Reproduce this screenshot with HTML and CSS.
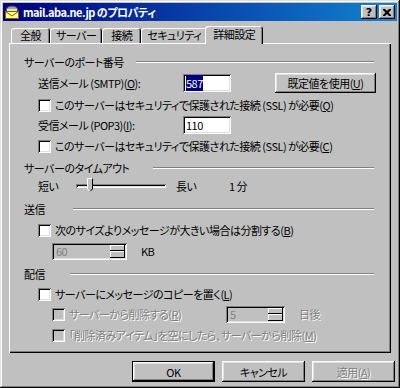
FILE: index.html
```html
<!DOCTYPE html>
<html lang="ja">
<head>
    <meta charset="UTF-8">
    <title>mail.aba.ne.jp のプロパティ</title>
    <link rel="stylesheet" href="styles.css">
</head>
<body>

<div class="window">
    <!-- Title Bar -->
    <div class="titlebar">
        <svg class="title-icon" width="16" height="16" viewBox="0 0 16 16">
            <path d="M2 7 Q2 2 8 2 Q14 2 14 7 Z" fill="#a0a0a0" stroke="#404040" stroke-width="1"/>
            <rect x="3" y="5" width="10" height="2" fill="#e0e0e0"/>
            <rect x="1.5" y="7.5" width="13" height="7" fill="#ffff80" stroke="#806000" stroke-width="1"/>
            <path d="M1.5 7.5 L8 12 L14.5 7.5" fill="none" stroke="#806000" stroke-width="1"/>
        </svg>
        <span class="title-text">mail.aba.ne.jp のプロパティ</span>
        <div class="caption-buttons">
            <button class="cap-btn">?</button>
            <button class="cap-btn cap-close">
                <svg width="8" height="7" viewBox="0 0 8 7"><path d="M0 0h2l2 2 2-2h2v1l-2.5 2.5L8 6v1H6L4 5 2 7H0V6l2.5-2.5L0 1z" fill="#000"/></svg>
            </button>
        </div>
    </div>

    <!-- Tabs -->
    <div class="tabs">
        <div class="tab tab-kanji">全般</div>
        <div class="tab">サーバー</div>
        <div class="tab tab-kanji">接続</div>
        <div class="tab">セキュリティ</div>
        <div class="tab active">詳細設定</div>
    </div>

    <div class="panel">
        <!-- Server Ports -->
        <div class="group-title">
            <span class="group-name">サーバーのポート番号</span>
            <span class="rule rule-ports"></span>
        </div>
        <div class="row row-field">
            <span class="port-label">送信メール (SMTP)(<u>O</u>):</span>
            <span class="field port-field"><span class="selected">587</span></span>
            <button class="btn btn-defaults">既定値を使用(<u>U</u>)</button>
        </div>
        <div class="row row-check">
            <span class="checkbox"></span>
            <span>このサーバーはセキュリティで保護された接続 (SSL) が必要(<u>Q</u>)</span>
        </div>
        <div class="row row-field row-pop">
            <span class="port-label">受信メール (POP3)(<u>I</u>):</span>
            <span class="field port-field">110</span>
        </div>
        <div class="row row-check row-pop-ssl">
            <span class="checkbox"></span>
            <span>このサーバーはセキュリティで保護された接続 (SSL) が必要(<u>C</u>)</span>
        </div>

        <!-- Timeout -->
        <div class="group-title group-gap">
            <span class="group-name">サーバーのタイムアウト</span>
            <span class="rule rule-timeout"></span>
        </div>
        <div class="row row-slider">
            <span class="slider-short">短い</span>
            <span class="slider">
                <span class="slider-track"></span>
                <svg class="slider-thumb" width="6" height="14" viewBox="0 0 6 14">
                    <path d="M0 0h6v11l-3 3-3-3z" fill="#c0c0c0"/>
                    <path d="M0.5 11V0.5h5" fill="none" stroke="#fff"/>
                    <path d="M5.5 0.5v10.5l-2.5 2.5" fill="none" stroke="#000"/>
                    <path d="M0.5 11l2.5 2.5" fill="none" stroke="#fff"/>
                </svg>
            </span>
            <span class="slider-long">長い</span>
            <span>1 分</span>
        </div>

        <!-- Sending -->
        <div class="group-title group-gap-small">
            <span class="group-name">送信</span>
            <span class="rule rule-send"></span>
        </div>
        <div class="row row-check row-split">
            <span class="checkbox"></span>
            <span>次のサイズよりメッセージが大きい場合は分割する(<u>B</u>)</span>
        </div>
        <div class="row row-field row-spin">
            <span class="spin spin-size">
                <span class="spin-value">60</span>
                <span class="spin-buttons"><span class="spin-up"></span><span class="spin-down"></span></span>
            </span>
            <span class="unit">KB</span>
        </div>

        <!-- Delivery -->
        <div class="group-title group-gap-small">
            <span class="group-name">配信</span>
            <span class="rule rule-deliver"></span>
        </div>
        <div class="row row-check row-copy">
            <span class="checkbox"></span>
            <span>サーバーにメッセージのコピーを置く(<u>L</u>)</span>
        </div>
        <div class="row row-field row-nested">
            <span class="checkbox disabled"></span>
            <span class="disabled-text remove-label">サーバーから削除する(<u>R</u>)</span>
            <span class="spin spin-days">
                <span class="spin-value">5</span>
                <span class="spin-buttons"><span class="spin-up"></span><span class="spin-down"></span></span>
            </span>
            <span class="disabled-text unit">日後</span>
        </div>
        <div class="row row-check row-nested-check">
            <span class="checkbox disabled"></span>
            <span class="disabled-text">「削除済みアイテム」を空にしたら、サーバーから削除(<u>M</u>)</span>
        </div>
    </div>

    <!-- Dialog Buttons -->
    <div class="dialog-buttons">
        <button class="btn btn-dialog btn-default">OK</button>
        <button class="btn btn-dialog">キャンセル</button>
        <button class="btn btn-dialog"><span class="disabled-text">適用(<u>A</u>)</span></button>
    </div>
</div>

</body>
</html>
```

FILE: styles.css
```css
/* General Styles */
body {
    margin: 0;
    padding: 0;
    background: #c0c0c0;
    font-family: "Noto Sans CJK JP", "Liberation Sans", sans-serif;
    font-size: 11px;
    line-height: 14px;
    letter-spacing: -0.5px;
    font-feature-settings: "palt";
    color: #000;
}

button {
    font: inherit;
    letter-spacing: inherit;
    color: inherit;
    padding: 0;
    margin: 0;
    border: none;
}

u {
    text-decoration: underline;
    text-underline-offset: 1px;
}

/* Window Frame */
.window {
    width: 400px;
    height: 388px;
    box-sizing: border-box;
    padding: 3px;
    background: #c0c0c0;
    box-shadow: inset -1px -1px #000, inset 1px 1px #dfdfdf, inset -2px -2px #808080, inset 2px 2px #fff;
    display: flex;
    flex-direction: column;
}

/* Title Bar */
.titlebar {
    height: 18px;
    display: flex;
    align-items: center;
    background: linear-gradient(to right, #000080, #1084d0);
    color: #fff;
    padding: 0 2px 0 1px;
}

.title-icon {
    flex: none;
}

.title-text {
    font-weight: bold;
    margin-left: 3px;
    flex: 1;
}

.caption-buttons {
    display: flex;
    gap: 2px;
}

.cap-btn {
    width: 16px;
    height: 14px;
    background: #c0c0c0;
    box-shadow: inset -1px -1px #000, inset 1px 1px #fff, inset -2px -2px #808080, inset 2px 2px #dfdfdf;
    font-family: "DejaVu Sans", sans-serif;
    font-weight: bold;
    font-size: 11px;
    line-height: 13px;
    letter-spacing: 0;
    color: #000;
    display: flex;
    align-items: center;
    justify-content: center;
}

/* Tabs */
.tabs {
    height: 22px;
    display: flex;
    align-items: flex-end;
    margin: 0 6px;
    padding-left: 2px;
}

.tab {
    height: 15px;
    line-height: 15px;
    padding: 0 6px;
    background: #c0c0c0;
    border-radius: 3px 3px 0 0;
    box-shadow: inset 1px 1px #fff, inset -1px 0 #000, inset -2px 0 #808080;
}

.tab-kanji {
    padding: 0 9px;
}

.tab.active {
    height: 18px;
    line-height: 17px;
    padding: 0 8px;
    margin: 0 -2px -1px;
    position: relative;
    z-index: 1;
}

/* Property Panel */
.panel {
    height: 310px;
    box-sizing: border-box;
    margin: 0 6px;
    padding: 12px 15px 0 15px;
    box-shadow: inset 1px 1px #fff, inset -1px -1px #000, inset -2px -2px #808080;
    display: flex;
    flex-direction: column;
}

.group-title {
    height: 14px;
    display: flex;
    align-items: center;
}

.group-gap {
    margin-top: 7px;
}

.group-gap-small {
    margin-top: 6px;
}

.rule {
    flex: 1;
    height: 0;
    border-top: 1px solid #808080;
    border-bottom: 1px solid #fff;
    margin-right: 2px;
}

.group-name {
    white-space: nowrap;
}

.rule-ports { margin-left: 12px; }
.rule-timeout { margin-left: 24px; }
.rule-send { margin-left: 28px; }
.rule-deliver { margin-left: 25px; }

.row {
    display: flex;
    align-items: center;
    padding-left: 14px;
    white-space: nowrap;
}

.row-field {
    height: 20px;
    margin-top: 4px;
}

.row-check {
    height: 16px;
    margin-top: 4px;
}

.row-pop { margin-top: 2px; }
.row-pop-ssl { margin-top: 3px; }
.row-split { margin-top: 6px; }
.row-spin { margin-top: 3px; padding-left: 28px; }
.row-copy { margin-top: 5px; }
.row-nested { margin-top: 2px; padding-left: 28px; }
.row-nested-check { margin-top: 3px; padding-left: 28px; }

.port-label {
    width: 145px;
}

/* Sunken Fields */
.field {
    height: 18px;
    box-sizing: border-box;
    padding: 2px 3px;
    background: #fff;
    box-shadow: inset 1px 1px #808080, inset -1px -1px #fff, inset 2px 2px #000, inset -2px -2px #dfdfdf;
    line-height: 14px;
}

.port-field {
    width: 48px;
}

.selected {
    background: #000080;
    color: #fff;
}

.checkbox {
    width: 13px;
    height: 13px;
    flex: none;
    box-sizing: border-box;
    background: #fff;
    box-shadow: inset 1px 1px #808080, inset -1px -1px #fff, inset 2px 2px #000, inset -2px -2px #dfdfdf;
    margin-right: 4px;
}

.checkbox.disabled {
    background: #c0c0c0;
}

.disabled-text {
    color: #808080;
    text-shadow: 1px 1px #fff;
}

/* Buttons */
.btn {
    background: #c0c0c0;
    box-shadow: inset -1px -1px #000, inset 1px 1px #fff, inset -2px -2px #808080, inset 2px 2px #dfdfdf;
}

.btn-defaults {
    width: 101px;
    height: 20px;
    margin-left: auto;
}

/* Slider */
.row-slider {
    height: 20px;
    margin-top: 1px;
}

.slider-short {
    width: 38px;
}

.slider {
    width: 90px;
    height: 20px;
    position: relative;
    display: flex;
    align-items: center;
}

.slider-track {
    width: 100%;
    height: 4px;
    box-sizing: border-box;
    box-shadow: inset 1px 1px #808080, inset -1px -1px #fff, inset 2px 2px #000, inset -2px -2px #dfdfdf;
}

.slider-thumb {
    position: absolute;
    left: 11px;
    top: 2px;
}

.slider-long {
    width: 53px;
    margin-left: 10px;
}

/* Spin Controls */
.spin {
    height: 17px;
    box-sizing: border-box;
    display: flex;
    padding: 2px;
    box-shadow: inset 1px 1px #808080, inset -1px -1px #fff, inset 2px 2px #000, inset -2px -2px #dfdfdf;
}

.spin-size {
    width: 75px;
}

.spin-days {
    width: 59px;
    margin-left: 12px;
}

.spin-value {
    flex: 1;
    color: #808080;
    padding-left: 2px;
    line-height: 13px;
}

.spin-buttons {
    width: 15px;
    display: flex;
    flex-direction: column;
}

.spin-up,
.spin-down {
    flex: 1;
    background: #c0c0c0;
    box-shadow: inset -1px -1px #000, inset 1px 1px #fff;
}

.unit {
    margin-left: 14px;
}

.remove-label {
    width: 145px;
}

/* Dialog Buttons */
.dialog-buttons {
    display: flex;
    justify-content: flex-end;
    gap: 7px;
    margin-top: 8px;
    padding-right: 2px;
}

.btn-dialog {
    width: 83px;
    height: 21px;
}

.btn-default {
    box-shadow: inset 0 0 0 1px #000, inset -2px -2px #000, inset 2px 2px #fff, inset -3px -3px #808080, inset 3px 3px #dfdfdf;
}
```
